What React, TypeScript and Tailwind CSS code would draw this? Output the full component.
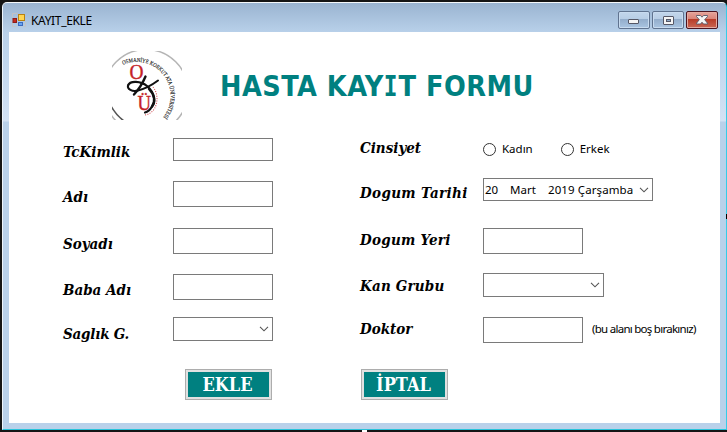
import type { ReactNode } from "react";

const labelFont =
  "font-['DejaVu_Serif_Condensed','DejaVu_Serif',serif] [font-stretch:condensed] font-bold italic text-[15px] leading-[20px] text-black whitespace-nowrap";
const smallFont = "font-['Noto_Sans',sans-serif] text-[11.5px] leading-[16px] text-black whitespace-nowrap";

function Row({ label, className, labelClass, wide, children }: {
  label: string; className: string; labelClass: string; wide?: boolean; children: ReactNode;
}) {
  return (
    <div className={`flex items-start ${className}`}>
      <div className={`${labelFont} shrink-0 ${wide ? "w-[123px]" : "w-[111px] pl-px"}`}>
        <div className={labelClass}>{label}</div>
      </div>
      {children}
    </div>
  );
}

function Box({ className }: { className: string }) {
  return <div className={`border border-[#7a7a7a] bg-white ${className}`} />;
}

function Chevron() {
  return (
    <svg width="10" height="6" viewBox="0 0 10 6" className="shrink-0" fill="none" stroke="#555" strokeWidth="1.1">
      <path d="M1 .8 5 4.8 9 .8" />
    </svg>
  );
}

function Combo({ className }: { className: string }) {
  return (
    <div className={`flex items-center justify-end border border-[#7a7a7a] bg-white pr-[3px] ${className}`}>
      <Chevron />
    </div>
  );
}

function Radio({ label }: { label: string }) {
  return (
    <div className={`flex items-center gap-[6px] ${smallFont}`}>
      <span className="size-[13px] rounded-full border border-[#333]" />
      {label}
    </div>
  );
}

function Logo() {
  return (
    <svg width="70" height="69" viewBox="0 0 70 69" className="shrink-0 overflow-hidden">
      <circle cx="34" cy="40.5" r="42" fill="none" stroke="#b5b5b5" strokeWidth="1.5" />
      <path d="M-1 55Q4 64 12 70" fill="none" stroke="#555" strokeWidth="1.6" />
      <path id="seal" d="M11.2 13.7A34 34 0 0 1 44 72.9" fill="none" />
      <text fill="#222" stroke="#222" strokeWidth=".15" className="font-['Liberation_Serif',serif] text-[5.8px]">
        <textPath href="#seal" textLength="90" lengthAdjust="spacingAndGlyphs">OSMANİYE KORKUT ATA ÜNİVERSİTESİ</textPath>
      </text>
      <text x="17.5" y="28" fill="#c51f27" stroke="#c51f27" strokeWidth=".4" textLength="14" lengthAdjust="spacingAndGlyphs" className="font-['Liberation_Serif',serif] text-[22px]">O</text>
      <text x="25.5" y="58.5" fill="#c51f27" stroke="#c51f27" strokeWidth=".4" textLength="13.5" lengthAdjust="spacingAndGlyphs" className="font-['Liberation_Serif',serif] text-[21px]">Ü</text>
      <g fill="none" stroke="#111" strokeLinecap="round">
        <path d="M33.5 25.5Q29 36 22 43.5" strokeWidth="2.4" />
        <path d="M46 29.5Q36 37 26 39.5C20 41 15 38 16 34.5" strokeWidth="2" />
        <path d="M16 34.5C18 29 29 30 35 35C43 42 44 51 39.7 56Q37 60.5 33 61.5" strokeWidth="2.2" />
        <path d="M37 38C43 44 43.500 51 40 55.500" strokeWidth="2.4" />
      </g>
      <path d="M41 36C48 44 46 62 33 64" fill="none" stroke="#d24a50" strokeWidth="1.1" strokeDasharray="1 1.4" />
    </svg>
  );
}

function AppIcon() {
  return (
    <svg width="14" height="14" viewBox="0 0 14 14" className="shrink-0">
      <path d="M.5 4V.5h5M.5 10v3.500h4M13.500 9v4.500h-2" fill="none" stroke="#c9c3bd" strokeWidth=".8" />
      <rect x="6.5" y="1.5" width="6" height="6" fill="#ffd552" stroke="#b98212" />
      <rect x="1" y="5.5" width="3.5" height="4" fill="#c5281d" stroke="#8e1c16" />
      <rect x="6.5" y="9.5" width="4" height="3" fill="#68a4f1" stroke="#3c6bc0" />
    </svg>
  );
}

function CaptionButton({ kind }: { kind: "min" | "max" | "close" }) {
  const close = kind === "close";
  return (
    <div
      className={`flex h-[18px] w-[32px] items-center justify-center rounded-[2px] border ${
        close
          ? "border-[#4c1420] bg-[linear-gradient(#e6a39a_0%,#d98377_45%,#b83c28_46%,#ca6754_100%)] shadow-[inset_0_0_0_1px_#e4aaa0]"
          : "border-[#60738f] bg-[linear-gradient(#c2d6eb_0%,#b7cde5_45%,#93adcb_46%,#aac5e2_100%)] shadow-[inset_0_0_0_1px_#c8dbef]"
      }`}
    >
      {kind === "min" && (
        <svg width="12" height="10" viewBox="0 0 12 10"><rect x=".5" y="4.5" width="10" height="4" rx=".5" fill="#f5f5f5" stroke="#555766" /></svg>
      )}
      {kind === "max" && (
        <svg width="11" height="9" viewBox="0 0 11 9"><rect x=".5" y=".5" width="10" height="8" rx=".5" fill="#f5f5f5" stroke="#555766" /><rect x="3.5" y="3.5" width="4" height="2" fill="#8fa9c7" stroke="#555766" /></svg>
      )}
      {kind === "close" && (
        <svg width="12" height="10" viewBox="0 0 12 10"><path d="M.5 .5H4.500L6 2.200 7.500.5H11.500V1.500L8.700 4.700 11.500 8.200V9H7.500L6 7.200 4.500 9H.5V8.200L3.300 4.700 .5 1.500Z" fill="#f5f5f5" stroke="#555766" strokeWidth=".9" /></svg>
      )}
    </div>
  );
}

function FormButton({ children }: { children: string }) {
  return (
    <div className="h-[31px] w-[87px] border border-[#adadad] bg-[#e1e1e1] p-[2px]">
      <div className="flex h-full items-center justify-center bg-[#008080] pr-[2px] font-['DejaVu_Serif_Condensed','DejaVu_Serif',serif] text-[18px] leading-[25px] font-bold [font-stretch:condensed] text-white">
        {children}
      </div>
    </div>
  );
}

export default function App() {
  return (
    <div className="relative h-[432px] w-[727px] overflow-hidden bg-[#151515] pt-[2px] pl-[2px]">
      <div className="flex h-[428px] w-[725px] flex-col rounded-t-[5px] border border-t-[#f4f8fb] border-r-[#35cde8] border-b-[#27c3da] border-l-[#edf4fb] bg-[linear-gradient(#9ab4d1_0px,#b9d1ea_30px,#d3e2f4_118px,#b9d1ea_119px)] px-[6px] pb-[6px]">
        <div className="flex h-[29px] shrink-0 items-start pt-[8px]">
          <div className="ml-[3px] mt-[2px]"><AppIcon /></div>
          <div className="mt-[2px] ml-[5px] font-['Noto_Sans',sans-serif] text-[12px] leading-[16px] tracking-[-0.35px] text-black">KAYIT_EKLE</div>
          <div className="mr-[2px] ml-auto flex gap-[2px]">
            <CaptionButton kind="min" />
            <CaptionButton kind="max" />
            <CaptionButton kind="close" />
          </div>
        </div>

        <main className="h-[391px] shrink-0 bg-white">
          <header className="flex h-[106px] pt-[19px] pl-[103px]">
            <Logo />
            <h1 className="mt-[18px] ml-[38px] h-[36px] font-['DejaVu_Sans_Condensed','DejaVu_Sans',sans-serif] text-[28.5px] leading-[36px] font-bold tracking-[0.5px] whitespace-nowrap text-[#008080] [font-stretch:condensed]">
              HASTA KAY<span className="mx-[-1.5px] inline-block scale-x-80 font-['DejaVu_Sans_Mono',monospace]">I</span>T FORMU
            </h1>
          </header>

          <div className="flex h-[231px] pl-[53px]">
            <section className="w-[298px] shrink-0">
              <Row label="TcKimlik" className="h-[43px]" labelClass="mt-[4px]"><Box className="h-[23px] w-[100px]" /></Row>
              <Row label="Adı" className="h-[47px]" labelClass="mt-[6px]"><Box className="h-[26px] w-[100px]" /></Row>
              <Row label="Soyadı" className="h-[46px]" labelClass="mt-[6px]"><Box className="h-[26px] w-[100px]" /></Row>
              <Row label="Baba Adı" className="h-[43px]" labelClass="mt-[6px]"><Box className="h-[26px] w-[100px]" /></Row>
              <Row label="Saglık G." className="h-[24px]" labelClass="mt-[7px] tracking-[-0.2px]"><Combo className="h-[24px] w-[100px]" /></Row>
            </section>
            <section>
              <Row wide label="Cinsiyet" className="h-[40px]" labelClass="">
                <div className="mt-[3px] flex gap-[28px]"><Radio label="Kadın" /><Radio label="Erkek" /></div>
              </Row>
              <Row wide label="Dogum Tarihi" className="h-[50px]" labelClass="mt-[5px] tracking-[0.35px]">
                <div className={`flex h-[23px] w-[170px] items-center border border-[#7a7a7a] pr-[3px] pl-[1px] ${smallFont}`}>
                  <span className="w-[25px]">20</span><span className="w-[38px]">Mart</span><span className="tracking-[0.1px]">2019 Çarşamba</span>
                  <span className="ml-auto"><Chevron /></span>
                </div>
              </Row>
              <Row wide label="Dogum Yeri" className="h-[45px]" labelClass="mt-[2px] tracking-[0.25px]"><Box className="h-[26px] w-[100px]" /></Row>
              <Row wide label="Kan Grubu" className="h-[44px]" labelClass="mt-[3px] tracking-[0.2px]"><Combo className="h-[24px] w-[121px]" /></Row>
              <Row wide label="Doktor" className="h-[26px]" labelClass="mt-[2px]">
                <Box className="h-[26px] w-[100px]" />
                <div className={`mt-[4px] ml-[9px] tracking-[-0.73px] ${smallFont}`}>(bu alanı boş bırakınız)</div>
              </Row>
            </section>
          </div>

          <footer className="flex gap-[89px] pl-[176px]">
            <FormButton>EKLE</FormButton>
            <FormButton>İPTAL</FormButton>
          </footer>
        </main>
      </div>
      <span className="absolute bottom-0 left-[362px] h-[2px] w-[5px] bg-white" />
      <span className="absolute top-[214px] right-0 h-[5px] w-[1px] bg-black" />
    </div>
  );
}
